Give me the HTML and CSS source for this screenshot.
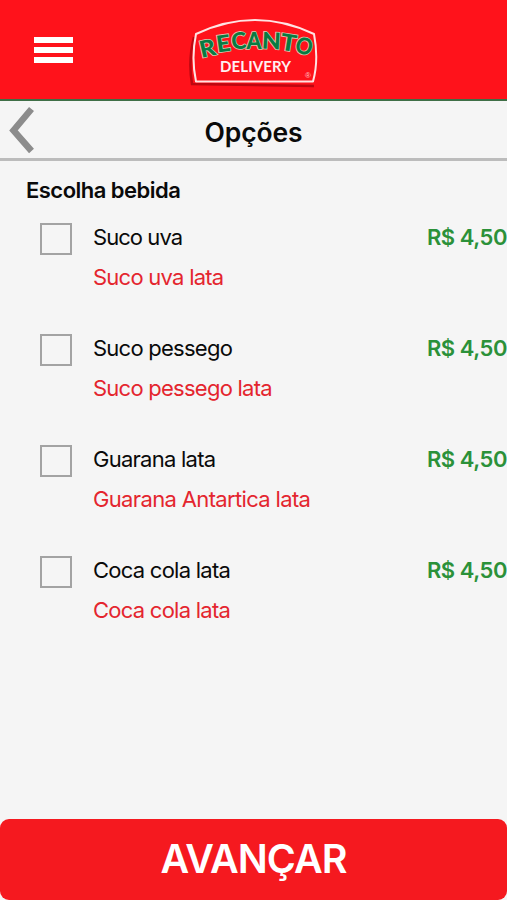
FILE: index.html
```html
<!DOCTYPE html>
<html lang="pt-BR">
<head>
<meta charset="utf-8">
<title>Opções</title>
<link rel="stylesheet" href="styles.css">
</head>
<body>
<header class="topbar">
  <button class="menu" aria-label="Menu"><span></span><span></span><span></span></button>
  <svg class="logo" viewBox="0 0 150 85" role="img" aria-label="Recanto Delivery">
    <path class="logo-shadow" d="M14 27 Q8 50 12 74 L134 76"/>
    <path class="logo-frame" d="M16 24 Q75 -4 134 24 Q139 50 133 71.500 L16 71.500 Q11 48 16 24Z"/>
    <g class="logo-name">
      <text transform="translate(21.500 48) rotate(-13)" textLength="16" lengthAdjust="spacingAndGlyphs">R</text>
      <text transform="translate(37.500 42.500) rotate(-8)" textLength="14" lengthAdjust="spacingAndGlyphs">E</text>
      <text transform="translate(52 39.500) rotate(-5)" textLength="15" lengthAdjust="spacingAndGlyphs">C</text>
      <text transform="translate(66.500 38.500)" textLength="15" lengthAdjust="spacingAndGlyphs">A</text>
      <text transform="translate(81.500 38.500) rotate(3)" textLength="19" lengthAdjust="spacingAndGlyphs">N</text>
      <text transform="translate(99.500 39.500) rotate(9)" textLength="16" lengthAdjust="spacingAndGlyphs">T</text>
      <text transform="translate(114 42) rotate(14)" textLength="17" lengthAdjust="spacingAndGlyphs">O</text>
    </g>
    <text class="logo-sub" x="40" y="61.500" textLength="71">DELIVERY</text>
    <text class="logo-mark" x="125" y="58">®</text>
  </svg>
</header>
<nav class="titlebar">
  <svg class="back" viewBox="0 0 28 50"><path d="M23.500 4 L5.500 25.500 L23.500 46"/></svg>
  <h1>Opções</h1>
</nav>
<main>
  <h2>Escolha bebida</h2>
  <ul class="options">
    <li><span class="box"></span><div class="info"><p class="name short">Suco uva</p><p class="desc">Suco uva lata</p></div><span class="price">R$ 4,50</span></li>
    <li><span class="box"></span><div class="info"><p class="name">Suco pessego</p><p class="desc">Suco pessego lata</p></div><span class="price">R$ 4,50</span></li>
    <li><span class="box"></span><div class="info"><p class="name">Guarana lata</p><p class="desc long">Guarana Antartica lata</p></div><span class="price">R$ 4,50</span></li>
    <li><span class="box"></span><div class="info"><p class="name">Coca cola lata</p><p class="desc">Coca cola lata</p></div><span class="price">R$ 4,50</span></li>
  </ul>
</main>
<footer><button class="next">AVANÇAR</button></footer>
</body>
</html>
```

FILE: styles.css
```css
* { box-sizing: border-box; margin: 0; padding: 0; }
body {
  height: 900px;
  display: flex;
  flex-direction: column;
  overflow: hidden;
  background: #f5f5f5;
  color: #0a0a0a;
  font-family: Inter, "Liberation Sans", sans-serif;
}
button { border: 0; background: none; font: inherit; }
.topbar {
  flex: none;
  height: 101px;
  display: grid;
  grid-template-columns: 180px 150px 1fr;
  background: #ff121b;
  border-bottom: 2px solid #3f6f47;
}
.menu {
  display: flex;
  flex-direction: column;
  gap: 4px;
  padding: 37px 0 0 34px;
}
.menu span { width: 39px; height: 6px; background: #fff; }
.logo { width: 150px; height: 85px; margin-top: 10px; }
.logo-frame { fill: none; stroke: #ffe3e3; stroke-width: 2; stroke-linejoin: round; }
.logo-shadow { fill: none; stroke: #bd0710; stroke-width: 2.5; }
.logo-name {
  font: 900 23px Lato, sans-serif;
  fill: #087b42;
  stroke: #d9c9b2;
  stroke-width: 1.6px;
  paint-order: stroke;
}
.logo-sub { font: 700 15px Lato, sans-serif; fill: #fff0f0; }
.logo-mark { font: 8px "Liberation Sans", sans-serif; fill: #ffc5c5; transform: translateY(10px); }
.titlebar {
  flex: none;
  height: 60px;
  display: grid;
  grid-template-columns: 60px 1fr 60px;
  border-bottom: 3px solid #bcbcbc;
}
.back { width: 28px; height: 50px; margin: 4px 0 0 8px; }
.back path { fill: none; stroke: #8c8c8c; stroke-width: 6.5; }
h1 { font-size: 26.5px; font-weight: 600; line-height: 62px; text-align: center; letter-spacing: -0.1px; }
main { flex: 1; }
h2 { padding: 14px 0 0 26px; font-size: 22px; line-height: 30px; font-weight: 600; letter-spacing: -0.52px; }
.options { list-style: none; padding-top: 16.500px; }
.options li { display: flex; height: 111.200px; padding-left: 40px; }
.box { width: 32px; height: 32px; margin-top: 1.400px; border: 2px solid #a3a3a3; }
.info { flex: 1; margin-left: 21px; font-size: 22px; }
.name { line-height: 30px; }
.desc { margin-top: 10.200px; line-height: 30px; color: #e4252e; }
.name, .desc { letter-spacing: -0.75px; }
.name.short { letter-spacing: -0.95px; }
.desc.long { letter-spacing: -0.65px; }
.price { color: #2b9139; font-size: 22px; line-height: 30px; font-weight: 600; letter-spacing: -0.45px; white-space: nowrap; }
footer { flex: none; height: 81px; background: #f5f5f5; }
.next {
  width: 100%;
  height: 81px;
  border-radius: 9px;
  background: #f5191f;
  color: #fff;
  font-size: 39.5px;
  font-weight: 600;
  line-height: 81px;
  letter-spacing: -1px;
}
```
